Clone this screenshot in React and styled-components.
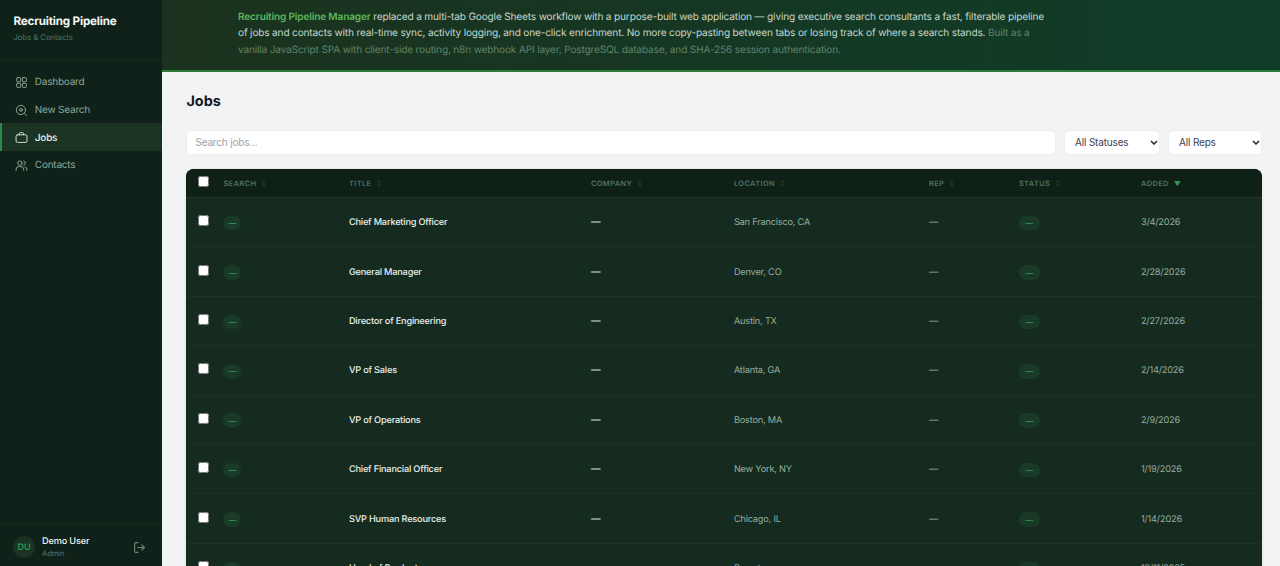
import React from 'react';
import styled, { createGlobalStyle } from 'styled-components';

const GlobalStyle = createGlobalStyle`
   html, body {
      margin: 0;
      height: 100%;
      overflow: hidden;
      background: #f1f3f5;
      font-family: Inter, "Liberation Sans", sans-serif;
      text-rendering: geometricPrecision;
   }
   #root {
      height: 100%;
   }
`;

const Page = styled.div`
   display: flex;
   height: 566px;
   overflow: hidden;
`;

const Sidebar = styled.aside`
   display: flex;
   flex-direction: column;
   flex: 0 0 162px;
   background: #0f2118;
`;

const Brand = styled.div`
   height: 60px;
   box-sizing: border-box;
   padding: 14px 13.5px 0;
   border-bottom: 1px solid #17291f;
`;

const BrandName = styled.div`
   font-size: 11.6px;
   line-height: 14px;
   font-weight: 700;
   letter-spacing: -0.17px;
   color: #f4f7f5;
`;

const BrandSub = styled.div`
   margin-top: 4px;
   font-size: 7.8px;
   line-height: 11px;
   letter-spacing: -0.08px;
   color: #557563;
`;

const Nav = styled.nav`
   display: flex;
   flex-direction: column;
   flex: 1;
   padding-top: 8px;
`;

const NavItem = styled.div`
   display: flex;
   align-items: center;
   gap: 6.8px;
   height: 27.7px;
   box-sizing: border-box;
   padding: 1px 0 0 13px;
   font-size: 10px;
   letter-spacing: -0.22px;
   font-weight: ${props => props.$active ? 500 : 400};
   color: ${props => props.$active ? '#e8f0ea' : '#8ea898'};
   background: ${props => props.$active ? '#1a3322' : 'transparent'};
   border-left: 2px solid ${props => props.$active ? '#2d8a4e' : 'transparent'};
   svg {
      width: 13px;
      height: 13px;
      color: ${props => props.$active ? '#d5e2d9' : '#8ea898'};
   }
`;

const UserBar = styled.div`
   display: flex;
   align-items: center;
   height: 43px;
   box-sizing: border-box;
   padding: 4px 16px 0 13px;
   border-top: 1px solid #17291f;
`;

const Avatar = styled.div`
   display: flex;
   align-items: center;
   justify-content: center;
   width: 22px;
   height: 22px;
   margin-right: 7px;
   border-radius: 50%;
   background: #1a3322;
   color: #2f9a57;
   font-size: 9px;
   font-weight: 600;
`;

const UserText = styled.div`
   flex: 1;
`;

const UserName = styled.div`
   font-size: 9.2px;
   line-height: 12px;
   font-weight: 500;
   letter-spacing: -0.17px;
   color: #eef3f0;
`;

const UserRole = styled.div`
   font-size: 7.6px;
   line-height: 11px;
   letter-spacing: -0.1px;
   color: #557563;
`;

const LogoutIcon = styled.svg`
   width: 13px;
   height: 13px;
   color: #6f8a7a;
`;

const Main = styled.main`
   flex: 1;
   min-width: 0;
`;

const Banner = styled.div`
   height: 72px;
   box-sizing: border-box;
   padding: 8.6px 0 0 76px;
   background: linear-gradient(90deg, #1b321e 0%, #0f3d28 100%);
   border-bottom: 2px solid #2d7a3a;
`;

const BannerText = styled.p`
   width: 812px;
   margin: 0;
   font-size: 10.1px;
   line-height: 16.6px;
   letter-spacing: -0.17px;
   color: #c6d6cb;
`;

const BannerStrong = styled.strong`
   font-weight: 600;
   color: #5cb85f;
`;

const BannerMuted = styled.span`
   color: #5f8269;
`;

const Content = styled.div`
   padding: 20px 18px 0 24.4px;
`;

const Title = styled.h1`
   margin: 0 0 19px;
   font-size: 14.4px;
   line-height: 19px;
   font-weight: 700;
   color: #14181f;
`;

const Filters = styled.div`
   display: flex;
   gap: 8px;
   margin-bottom: 14px;
`;

const SearchInput = styled.input`
   flex: 1;
   min-width: 0;
   height: 25px;
   box-sizing: border-box;
   padding: 0 8px 1px;
   border: 1px solid #eceef1;
   border-radius: 5px;
   background: #fff;
   font-family: inherit;
   font-size: 10px;
   letter-spacing: -0.17px;
   outline: none;
   &::placeholder {
      color: #9ba1ad;
   }
`;

const chevron = encodeURIComponent(
   '<svg xmlns="http://www.w3.org/2000/svg" width="8" height="5" viewBox="0 0 8 5"><path d="M1 1l3 3 3-3" fill="none" stroke="#1f2430" stroke-width="1.5"/></svg>'
);

const Select = styled.select`
   appearance: none;
   width: ${props => props.$width}px;
   height: 25px;
   box-sizing: border-box;
   padding: 0 10px 1px;
   border: 1px solid #eceef1;
   border-radius: 5px;
   background: #fff url("data:image/svg+xml,${chevron}") no-repeat right 1.5px center;
   color: #3b4252;
   font-family: inherit;
   font-size: 10px;
   letter-spacing: -0.17px;
`;

const Table = styled.div`
   background: #152b20;
   border-radius: 8px 8px 0 0;
   overflow: hidden;
   box-shadow: 0 0 1px rgba(0, 0, 0, 0.4);
`;

const columns = '37px 125.5px 242px 143px 195px 90px 122px 1fr';

const HeaderRow = styled.div`
   display: grid;
   grid-template-columns: ${columns};
   align-items: center;
   height: 29px;
   box-sizing: border-box;
   background: #0f2016;
   border-bottom: 1px solid #1e3527;
`;

const HeaderCell = styled.div`
   display: flex;
   align-items: center;
   gap: 5px;
   font-size: 7.4px;
   font-weight: 600;
   letter-spacing: 0.42px;
   color: #4f7560;
`;

const SortHint = styled.span`
   font-size: ${props => props.$active ? 7 : 6}px;
   letter-spacing: 0;
   color: ${props => props.$active ? '#2f9a57' : '#2a4032'};
`;

const Row = styled.div`
   display: grid;
   grid-template-columns: ${columns};
   align-items: center;
   height: 49.4px;
   box-sizing: border-box;
   padding-top: 1px;
   border-bottom: 1px solid #1c3226;
`;

const CheckCell = styled.div`
   display: flex;
   padding-left: 11.6px;
   margin-bottom: 4px;
`;

const Check = styled.input`
   width: 11px;
   height: 11px;
   margin: 0;
`;

const PillCell = styled.div`
   display: flex;
   margin-top: 1px;
`;

const Pill = styled.span`
   display: inline-flex;
   align-items: center;
   justify-content: center;
   width: ${props => props.$wide ? 21 : 18}px;
   height: 14.6px;
   border-radius: 7.3px;
   background: #1a3a28;
   color: #2f9a57;
   font-size: 7.8px;
   font-weight: 600;
`;

const JobTitle = styled.div`
   font-size: 9.2px;
   font-weight: 500;
   letter-spacing: -0.19px;
   color: #e9efeb;
`;

const Cell = styled.div`
   font-size: 9.2px;
   letter-spacing: -0.19px;
   color: ${props => props.$dash ? '#9aaca1' : '#97ad9f'};
`;

const CompanyDash = styled.div`
   font-size: 9.6px;
   font-weight: 500;
   color: #c9d6ce;
`;

const IconGrid = () => (
   <svg viewBox="0 0 24 24" fill="none" stroke="currentColor" strokeWidth="1.8" strokeLinecap="round" strokeLinejoin="round">
      <rect x="3" y="3" width="7.5" height="7.5" rx="1.5"/>
      <rect x="13.5" y="3" width="7.5" height="7.5" rx="1.5"/>
      <rect x="3" y="13.5" width="7.5" height="7.5" rx="1.5"/>
      <rect x="13.5" y="13.5" width="7.5" height="7.5" rx="1.5"/>
   </svg>
);

const IconSearch = () => (
   <svg viewBox="0 0 24 24" fill="none" stroke="currentColor" strokeWidth="1.8" strokeLinecap="round" strokeLinejoin="round">
      <circle cx="11" cy="11" r="8.5"/>
      <circle cx="11" cy="11" r="2.6"/>
      <path d="M17.5 17.5L21.5 21.5"/>
   </svg>
);

const IconBriefcase = () => (
   <svg viewBox="0 0 24 24" fill="none" stroke="currentColor" strokeWidth="1.8" strokeLinecap="round" strokeLinejoin="round">
      <rect x="2" y="7" width="20" height="14" rx="2.5"/>
      <path d="M8 7V5a2 2 0 0 1 2-2h4a2 2 0 0 1 2 2v2"/>
   </svg>
);

const IconUsers = () => (
   <svg viewBox="0 0 24 24" fill="none" stroke="currentColor" strokeWidth="1.8" strokeLinecap="round" strokeLinejoin="round">
      <circle cx="9" cy="7.5" r="4"/>
      <path d="M2 21v-2a5 5 0 0 1 5-5h4a5 5 0 0 1 5 5v2"/>
      <path d="M16 3.6a4 4 0 0 1 0 7.8"/>
      <path d="M22 21v-2a5 5 0 0 0-3.5-4.7"/>
   </svg>
);

const jobs = [
   ['Chief Marketing Officer', 'San Francisco, CA', '3/4/2026'],
   ['General Manager', 'Denver, CO', '2/28/2026'],
   ['Director of Engineering', 'Austin, TX', '2/27/2026'],
   ['VP of Sales', 'Atlanta, GA', '2/14/2026'],
   ['VP of Operations', 'Boston, MA', '2/9/2026'],
   ['Chief Financial Officer', 'New York, NY', '1/19/2026'],
   ['SVP Human Resources', 'Chicago, IL', '1/14/2026'],
   ['Head of Product', 'Remote', '12/11/2025'],
];

const headers = ['SEARCH', 'TITLE', 'COMPANY', 'LOCATION', 'REP', 'STATUS'];

export default function App() {
   return (
      <Page>
         <GlobalStyle/>
         <Sidebar>
            <Brand>
               <BrandName>Recruiting Pipeline</BrandName>
               <BrandSub>Jobs &amp; Contacts</BrandSub>
            </Brand>
            <Nav>
               <NavItem><IconGrid/>Dashboard</NavItem>
               <NavItem><IconSearch/>New Search</NavItem>
               <NavItem $active><IconBriefcase/>Jobs</NavItem>
               <NavItem><IconUsers/>Contacts</NavItem>
            </Nav>
            <UserBar>
               <Avatar>DU</Avatar>
               <UserText>
                  <UserName>Demo User</UserName>
                  <UserRole>Admin</UserRole>
               </UserText>
               <LogoutIcon viewBox="0 0 24 24" fill="none" stroke="currentColor" strokeWidth="2" strokeLinecap="round" strokeLinejoin="round">
                  <path d="M9 3H5a2 2 0 0 0-2 2v14a2 2 0 0 0 2 2h4"/>
                  <path d="M16 17l5-5-5-5"/>
                  <path d="M21 12H9"/>
               </LogoutIcon>
            </UserBar>
         </Sidebar>
         <Main>
            <Banner>
               <BannerText>
                  <BannerStrong>Recruiting Pipeline Manager</BannerStrong> replaced a multi-tab Google Sheets workflow with a purpose-built web application — giving executive search consultants a fast, filterable pipeline of jobs and contacts with real-time sync, activity logging, and one-click enrichment. No more copy-pasting between tabs or losing track of where a search stands. <BannerMuted>Built as a vanilla JavaScript SPA with client-side routing, n8n webhook API layer, PostgreSQL database, and SHA-256 session authentication.</BannerMuted>
               </BannerText>
            </Banner>
            <Content>
               <Title>Jobs</Title>
               <Filters>
                  <SearchInput placeholder="Search jobs..."/>
                  <Select $width={96}><option>All Statuses</option></Select>
                  <Select $width={94}><option>All Reps</option></Select>
               </Filters>
               <Table>
                  <HeaderRow>
                     <CheckCell><Check type="checkbox"/></CheckCell>
                     {headers.map(h => (
                        <HeaderCell key={h}>{h}<SortHint>↕</SortHint></HeaderCell>
                     ))}
                     <HeaderCell>ADDED <SortHint $active>▼</SortHint></HeaderCell>
                  </HeaderRow>
                  {jobs.map(([title, location, added]) => (
                     <Row key={title}>
                        <CheckCell><Check type="checkbox"/></CheckCell>
                        <PillCell><Pill>—</Pill></PillCell>
                        <JobTitle>{title}</JobTitle>
                        <CompanyDash>—</CompanyDash>
                        <Cell>{location}</Cell>
                        <Cell $dash>—</Cell>
                        <PillCell><Pill $wide>—</Pill></PillCell>
                        <Cell>{added}</Cell>
                     </Row>
                  ))}
               </Table>
            </Content>
         </Main>
      </Page>
   );
}
